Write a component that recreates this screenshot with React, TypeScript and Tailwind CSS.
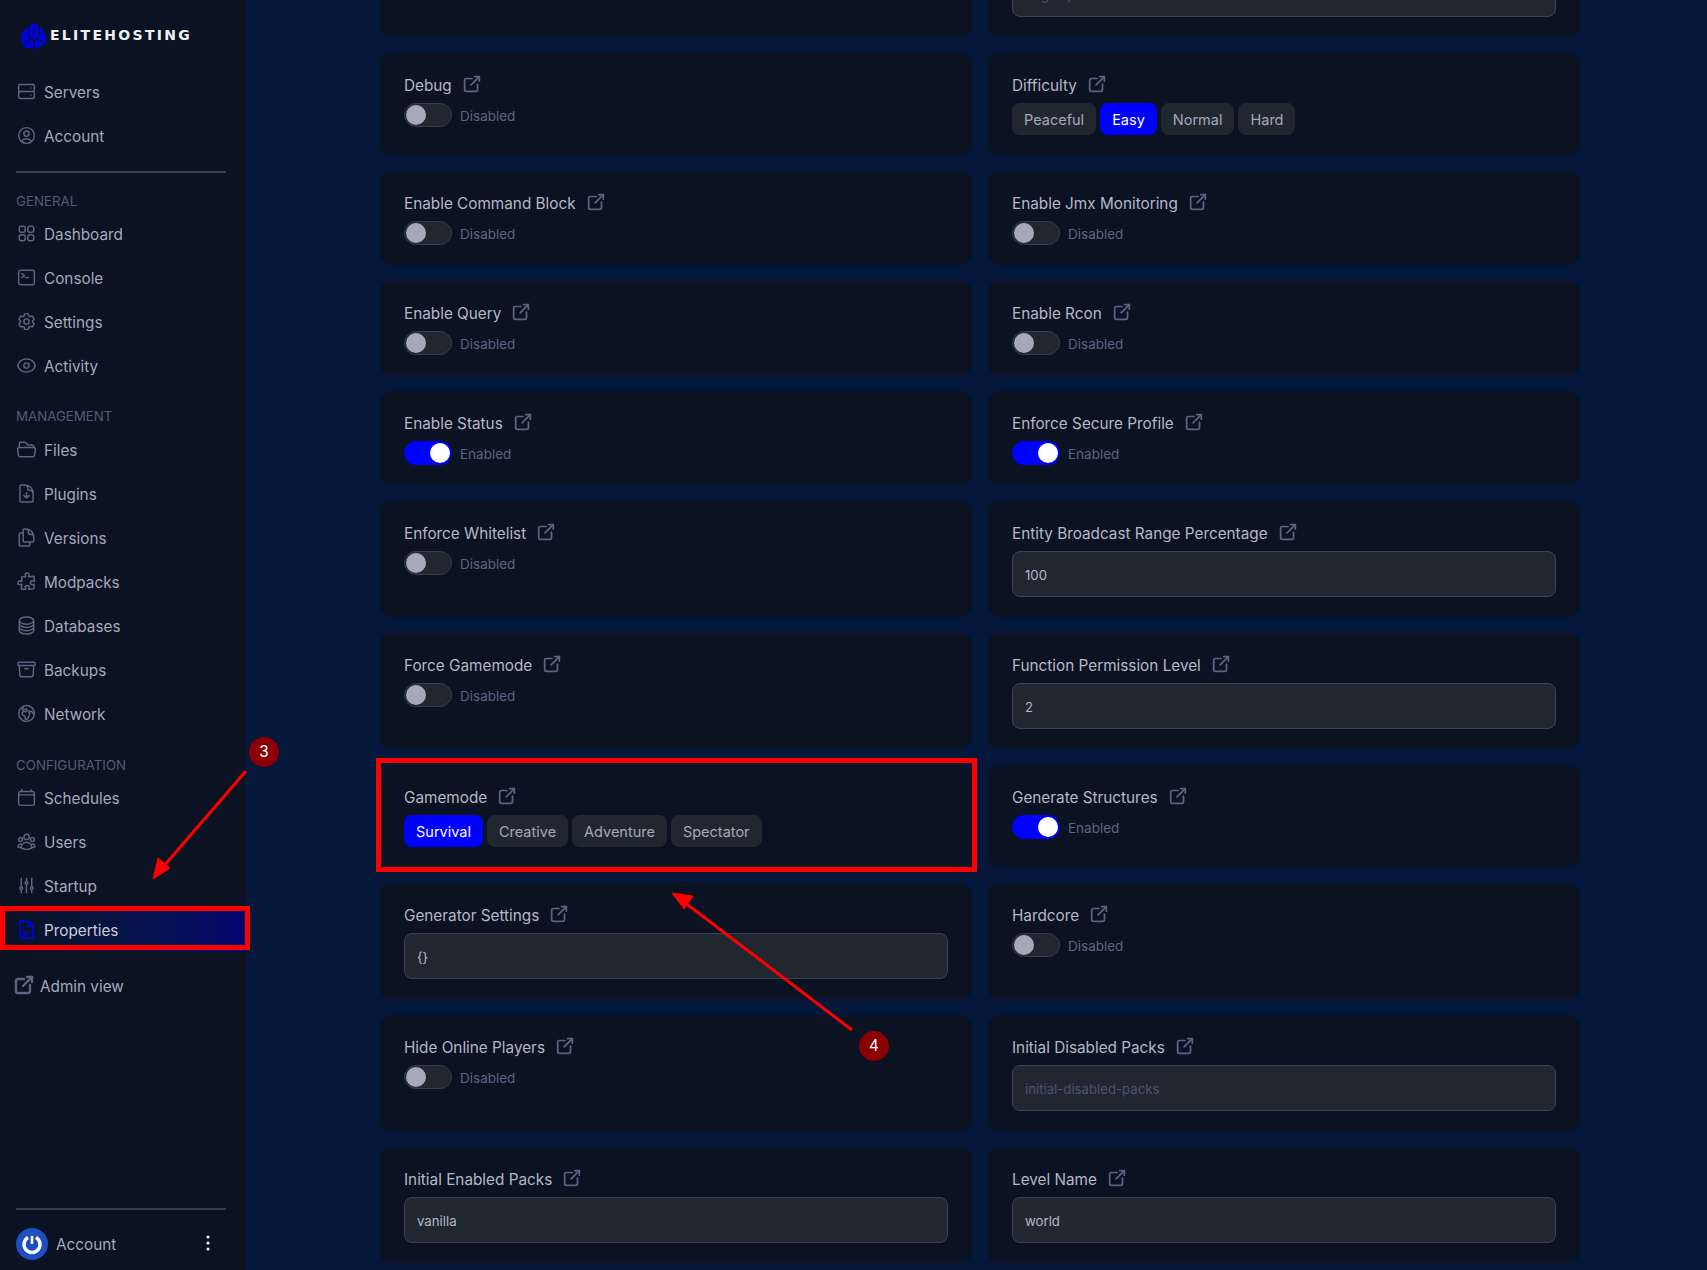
import React from 'react';
import { TbExternalLink } from 'react-icons/tb';
import { HiOutlineServer } from 'react-icons/hi';
import {
  HiOutlineUserCircle,
  HiOutlineSquares2X2,
  HiOutlineCommandLine,
  HiOutlineCog6Tooth,
  HiOutlineEye,
  HiOutlineFolderOpen,
  HiOutlineDocumentArrowDown,
  HiOutlineDocumentDuplicate,
  HiOutlinePuzzlePiece,
  HiOutlineCircleStack,
  HiOutlineArchiveBox,
  HiOutlineGlobeEuropeAfrica,
  HiOutlineCalendar,
  HiOutlineUserGroup,
  HiOutlineAdjustmentsVertical,
  HiOutlineDocumentText,
  HiEllipsisVertical,
} from 'react-icons/hi2';

type Prop =
  | { label: string; kind: 'toggle'; on?: boolean }
  | { label: string; kind: 'input'; value?: string; placeholder?: string }
  | { label: string; kind: 'choice'; options: string[]; active: string };

const props: Prop[] = [
  { label: 'Broadcast Rcon To Ops', kind: 'toggle', on: true },
  { label: 'Bug Report Link', kind: 'input', placeholder: 'bug-report-link' },
  { label: 'Debug', kind: 'toggle' },
  { label: 'Difficulty', kind: 'choice', options: ['Peaceful', 'Easy', 'Normal', 'Hard'], active: 'Easy' },
  { label: 'Enable Command Block', kind: 'toggle' },
  { label: 'Enable Jmx Monitoring', kind: 'toggle' },
  { label: 'Enable Query', kind: 'toggle' },
  { label: 'Enable Rcon', kind: 'toggle' },
  { label: 'Enable Status', kind: 'toggle', on: true },
  { label: 'Enforce Secure Profile', kind: 'toggle', on: true },
  { label: 'Enforce Whitelist', kind: 'toggle' },
  { label: 'Entity Broadcast Range Percentage', kind: 'input', value: '100' },
  { label: 'Force Gamemode', kind: 'toggle' },
  { label: 'Function Permission Level', kind: 'input', value: '2' },
  { label: 'Gamemode', kind: 'choice', options: ['Survival', 'Creative', 'Adventure', 'Spectator'], active: 'Survival' },
  { label: 'Generate Structures', kind: 'toggle', on: true },
  { label: 'Generator Settings', kind: 'input', value: '{}' },
  { label: 'Hardcore', kind: 'toggle' },
  { label: 'Hide Online Players', kind: 'toggle' },
  { label: 'Initial Disabled Packs', kind: 'input', placeholder: 'initial-disabled-packs' },
  { label: 'Initial Enabled Packs', kind: 'input', value: 'vanilla' },
  { label: 'Level Name', kind: 'input', value: 'world' },
];

const NavItem = ({ icon: Icon, label, active }: { icon: React.ElementType; label: string; active?: boolean }) => (
  <div
    className={`flex h-11 items-center gap-[7px] pl-4 ${
      active ? 'bg-gradient-to-r from-[#0b1222] to-[#04046e] text-[#c9cdd8]' : 'text-[#a3a9bb]'
    }`}
  >
    <Icon size={21} strokeWidth={1.7} className={`-mt-[2px] ${active ? 'text-[#0000ff]' : 'text-[#5d6483]'}`} />
    <span className="pt-[2px]">{label}</span>
  </div>
);

const SectionTitle = ({ children, className }: { children: React.ReactNode; className: string }) => (
  <div className={`translate-y-px pl-4 text-[13.3px] leading-5 text-[#545b7a] ${className}`}>{children}</div>
);

const Sidebar = () => (
  <aside className="flex h-full w-[246px] shrink-0 flex-col bg-[#0b1222] text-[15.3px]">
    <div className="flex h-[70px] items-center pl-[20px] pt-[1px]">
      <svg width="28" height="28" viewBox="0 0 28 28" fill="none">
        <path d="M14 1 23 7 27 21 15 27 3 25 1 14 6 6Z" fill="#0000e6" />
        <path d="M9 4v11l5 4 5-4V4M14 19v7M3 23l8-6M25 21l-8-4M14 6v8" stroke="#0b1222" strokeWidth="1.4" />
      </svg>
      <span className="ml-[2px] font-['DejaVu_Sans'] text-[14px] font-bold tracking-[2.3px] text-[#eef0f5]">ELITEHOSTING</span>
    </div>
    <NavItem icon={HiOutlineServer} label="Servers" />
    <NavItem icon={HiOutlineUserCircle} label="Account" />
    <div className="ml-4 mr-5 mt-[13px] h-0.5 shrink-0 bg-[#3a3d52]" />
    <SectionTitle className="mt-[17px]">GENERAL</SectionTitle>
    <div className="mt-[2px]">
      <NavItem icon={HiOutlineSquares2X2} label="Dashboard" />
      <NavItem icon={HiOutlineCommandLine} label="Console" />
      <NavItem icon={HiOutlineCog6Tooth} label="Settings" />
      <NavItem icon={HiOutlineEye} label="Activity" />
    </div>
    <SectionTitle className="mt-[17px]">MANAGEMENT</SectionTitle>
    <div className="mt-[3px]">
      <NavItem icon={HiOutlineFolderOpen} label="Files" />
      <NavItem icon={HiOutlineDocumentArrowDown} label="Plugins" />
      <NavItem icon={HiOutlineDocumentDuplicate} label="Versions" />
      <NavItem icon={HiOutlinePuzzlePiece} label="Modpacks" />
      <NavItem icon={HiOutlineCircleStack} label="Databases" />
      <NavItem icon={HiOutlineArchiveBox} label="Backups" />
      <NavItem icon={HiOutlineGlobeEuropeAfrica} label="Network" />
    </div>
    <SectionTitle className="mt-[18px]">CONFIGURATION</SectionTitle>
    <div className="mt-[2px]">
      <NavItem icon={HiOutlineCalendar} label="Schedules" />
      <NavItem icon={HiOutlineUserGroup} label="Users" />
      <NavItem icon={HiOutlineAdjustmentsVertical} label="Startup" />
      <NavItem icon={HiOutlineDocumentText} label="Properties" active />
    </div>
    <div className="mt-[12px] flex h-11 items-center gap-1 pl-3 text-[#a3a9bb]">
      <TbExternalLink size={24} strokeWidth={2.4} className="-mt-[2px] text-[#5d6483]" />
      <span className="pt-[2px]">Admin view</span>
    </div>
    <div className="ml-4 mr-5 mt-auto h-0.5 shrink-0 bg-[#3a3d52]" />
    <div className="flex h-[60px] items-center gap-2 pl-4 pr-[26px] pt-2 text-[#a3a9bb]">
      <div className="flex h-8 w-8 items-center justify-center rounded-full bg-[#1d4fc0]">
        <svg width="22" height="22" viewBox="0 0 22 22" fill="none" stroke="#ffffff">
          <path d="M7 4.5a8 8 0 1 0 8 0" strokeWidth="3.4" />
          <path d="M11 3v8" strokeWidth="2.6" />
        </svg>
      </div>
      <span className="flex-1 pt-[2px]">Account</span>
      <HiEllipsisVertical size={24} className="-mt-[2px] text-white" />
    </div>
  </aside>
);

const Toggle = ({ on }: { on?: boolean }) => (
  <div className="flex h-6 items-center gap-2">
    <div
      className={`flex h-6 w-12 items-center rounded-full border px-[1px] ${
        on ? 'justify-end border-[#0000ff] bg-[#0000ff]' : 'justify-start border-[#363b4d] bg-[#212731]'
      }`}
    >
      <div className={`h-5 w-5 rounded-full ${on ? 'bg-white' : 'bg-[#a8a8bb]'}`} />
    </div>
    <span className="pt-[2px] text-[13.5px] text-[#5d6483]">{on ? 'Enabled' : 'Disabled'}</span>
  </div>
);

const Field = ({ value, placeholder }: { value?: string; placeholder?: string }) => (
  <div className="flex h-[46px] items-center rounded-lg border border-[#3c4154] bg-[#212731] px-3 pt-[3px] text-[13.2px]">
    {value ? <span className="text-[#b4b9c6]">{value}</span> : <span className="text-[#4c5372]">{placeholder}</span>}
  </div>
);

const Choice = ({ options, active }: { options: string[]; active: string }) => (
  <div className="flex gap-1">
    {options.map((o) => (
      <div
        key={o}
        className={`flex h-8 items-center rounded-lg px-3 pt-[2px] text-[14.5px] ${
          o === active ? 'bg-[#0000ff] text-white' : 'bg-[#212731] text-[#a3a9bb]'
        }`}
      >
        {o}
      </div>
    ))}
  </div>
);

const PropCard = ({ prop }: { prop: Prop }) => (
  <div className="rounded-xl bg-[#0b1222] px-6 py-5">
    <div className="flex h-6 items-center gap-[9px] text-[15.3px] text-[#b4b9c6]">
      <span className="pt-[2px]">{prop.label}</span>
      <TbExternalLink size={22} strokeWidth={1.9} className="-mt-[2px] text-[#5d6483]" />
    </div>
    <div className="mt-1.5">
      {prop.kind === 'toggle' && <Toggle on={prop.on} />}
      {prop.kind === 'input' && <Field value={prop.value} placeholder={prop.placeholder} />}
      {prop.kind === 'choice' && <Choice options={prop.options} active={prop.active} />}
    </div>
  </div>
);

// red markup drawn on top of the screenshot
const Annotations = () => (
  <>
    <div className="absolute left-0 top-[906px] h-[44px] w-[250px] border-[5px] border-[#ff0000]" />
    <div className="absolute left-[376px] top-[758px] h-[114px] w-[601px] border-[5px] border-[#ff0000]" />
    <svg className="pointer-events-none absolute left-0 top-0" width="1707" height="1270" fill="#ff0000" stroke="#ff0000">
      <path d="M246 771 163 867" strokeWidth="3" />
      <path d="M153 879 158 858 170 868Z" />
      <path d="M852 1030 684 902" strokeWidth="3" />
      <path d="M672 893 693 896 684 909Z" />
    </svg>
    {[
      { n: 3, cls: 'left-[249px] top-[737px]' },
      { n: 4, cls: 'left-[859px] top-[1031px]' },
    ].map((b) => (
      <div
        key={b.n}
        className={`absolute flex h-[30px] w-[30px] items-center justify-center rounded-full bg-[#8b0000] font-['Liberation_Sans'] text-base text-white ${b.cls}`}
      >
        {b.n}
      </div>
    ))}
  </>
);

export default function App() {
  return (
    <div className="relative flex h-[1270px] w-full overflow-hidden bg-[#05173a] font-['Inter',sans-serif] text-base">
      <Sidebar />
      <main className="flex-1 pl-[134px]">
        <div className="-mt-[79px] grid w-[1200px] grid-cols-2 gap-4">
          {props.map((p) => (
            <PropCard key={p.label} prop={p} />
          ))}
        </div>
      </main>
      <Annotations />
    </div>
  );
}
